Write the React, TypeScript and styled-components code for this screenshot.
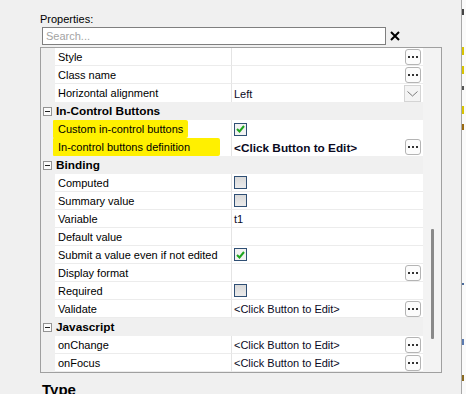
import styled, { createGlobalStyle } from 'styled-components';

const GlobalStyle = createGlobalStyle`
  html, body {
    margin: 0;
    padding: 0;
    background: #f0f0f0;
    overflow: hidden;
  }
  body {
    font-family: "Liberation Sans", Arial, sans-serif;
    font-size: 11px;
    color: #000;
  }
`;

type Row =
  | { kind: 'cat'; label: string }
  | {
      kind: 'prop';
      label: string;
      value?: string;
      bold?: boolean;
      check?: boolean;
      btn?: 'dots' | 'drop';
      hl?: number;
    };

const CLICK = '<Click Button to Edit>';

const rows: Row[] = [
  { kind: 'prop', label: 'Style', btn: 'dots' },
  { kind: 'prop', label: 'Class name', btn: 'dots' },
  { kind: 'prop', label: 'Horizontal alignment', value: 'Left', btn: 'drop' },
  { kind: 'cat', label: 'In-Control Buttons' },
  { kind: 'prop', label: 'Custom in-control buttons', check: true, hl: 5 },
  { kind: 'prop', label: 'In-control buttons definition', value: CLICK, bold: true, btn: 'dots', hl: 30 },
  { kind: 'cat', label: 'Binding' },
  { kind: 'prop', label: 'Computed', check: false },
  { kind: 'prop', label: 'Summary value', check: false },
  { kind: 'prop', label: 'Variable', value: 't1' },
  { kind: 'prop', label: 'Default value' },
  { kind: 'prop', label: 'Submit a value even if not edited', check: true },
  { kind: 'prop', label: 'Display format', btn: 'dots' },
  { kind: 'prop', label: 'Required', check: false },
  { kind: 'prop', label: 'Validate', value: CLICK, btn: 'dots' },
  { kind: 'cat', label: 'Javascript' },
  { kind: 'prop', label: 'onChange', value: CLICK, btn: 'dots' },
  { kind: 'prop', label: 'onFocus', value: CLICK, btn: 'dots' },
];

// little cut-off marks of the neighbouring panel: [gap above, height, colour]
const marks: [number, number, string][] = [
  [9, 6, '#444'],
  [32, 8, '#d8c400'],
  [11, 8, '#d8c400'],
  [12, 4, '#555'],
  [16, 8, '#d8c400'],
  [10, 6, '#9a6a10'],
  [153, 2, '#4a6a9a'],
  [54, 6, '#5a7ab0'],
  [30, 6, '#8a6a20'],
];

const Page = styled.div`
  display: flex;
  height: 394px;
`;

const Panel = styled.div`
  width: 462px;
  padding: 12px 0 0 40px;
  box-sizing: border-box;
  display: flex;
  flex-direction: column;
  border-right: 1px solid #a7a7a7;
`;

const Label = styled.div`
  line-height: 14px;
  margin-bottom: 1px;
`;

const SearchRow = styled.div`
  display: flex;
  align-items: center;
  gap: 4px;
  margin-left: 2px;
`;

const SearchBox = styled.div`
  width: 344px;
  height: 18px;
  box-sizing: border-box;
  border: 1px solid #7f7f7f;
  background: #fff;
  color: #a3a3a3;
  padding-left: 3px;
  line-height: 16px;
`;

const Grid = styled.div`
  margin-top: 2px;
  width: 402px;
  height: 330px;
  box-sizing: border-box;
  border: 1px solid #a0a0a0;
  display: flex;
  background: #f0f0f0;
`;

const List = styled.div`
  width: 382px;
  display: flex;
  flex-direction: column;
`;

const PropRow = styled.div`
  display: grid;
  grid-template-columns: 14px 177px 1fr;
  height: 18px;
`;

const Gutter = styled.div`
  display: flex;
  align-items: center;
  padding-left: 2px;
`;

const NameCell = styled.div`
  background: #fff;
  border-bottom: 1px solid #ececec;
  border-right: 1px solid #e4e4e4;
  padding: 1px 0 0 3px;
  line-height: 16px;
  white-space: nowrap;
`;

const ValueCell = styled.div<{ $bold?: boolean }>`
  background: #fff;
  border-bottom: 1px solid #ececec;
  display: flex;
  align-items: center;
  padding: 0 2px 0 2px;
  white-space: nowrap;
  font-weight: ${(p) => (p.$bold ? 700 : 400)};
  font-size: ${(p) => (p.$bold ? '11.8px' : '11px')};
  color: #0a0a1e;
`;

const ValueText = styled.span`
  flex: 1;
  padding-top: 1px;
`;

const Highlight = styled.span<{ $extra: number }>`
  display: inline-block;
  background: #fff000;
  margin-left: -5px;
  padding: 0 ${(p) => p.$extra}px 0 5px;
  height: 18px;
  margin-top: -1px;
  line-height: 18px;
  border-radius: 1px 2px 2px 1px;
`;

const CatRow = styled.div`
  display: grid;
  grid-template-columns: 14px 1fr;
  height: 18px;
  background: #f0f0f0;
`;

const CatLabel = styled.div`
  font-weight: 700;
  font-size: 11.8px;
  line-height: 18px;
  padding-left: 1px;
`;

const Collapse = styled.div`
  width: 9px;
  height: 9px;
  box-sizing: border-box;
  border: 1px solid #939393;
  background: #fbfbfb;
  display: flex;
  align-items: center;
  justify-content: center;
  &::after {
    content: '';
    width: 5px;
    height: 1px;
    background: #222;
  }
`;

const Check = styled.div<{ $on: boolean }>`
  width: 13px;
  height: 13px;
  box-sizing: border-box;
  border: 1px solid #2f4f74;
  background: ${(p) => (p.$on ? '#f2f2f2' : 'linear-gradient(#d9d9d9, #ebebeb)')};
  display: flex;
  align-items: center;
  justify-content: center;
`;

const DotsButton = styled.div`
  width: 16px;
  height: 16px;
  box-sizing: border-box;
  border: 1px solid #b4b4b4;
  border-radius: 3px;
  background: #fcfcfc;
  display: flex;
  align-items: center;
  justify-content: center;
  margin-left: auto;
`;

const DropButton = styled.div`
  width: 17px;
  height: 17px;
  box-sizing: border-box;
  border: 1px solid #d4d4d4;
  background: #f4f4f4;
  display: flex;
  align-items: center;
  justify-content: center;
  margin-left: auto;
  margin-top: 1px;
`;

const Scroll = styled.div`
  width: 18px;
  display: flex;
  justify-content: center;
  background: #f3f3f3;
`;

const Thumb = styled.div`
  width: 3px;
  height: 110px;
  margin-top: 181px;
  background: #898989;
  border-radius: 1px;
`;

const Heading = styled.div`
  margin-top: 8px;
  margin-left: 2px;
  font-weight: 700;
  font-size: 15px;
  line-height: 18px;
`;

const Strip = styled.div`
  flex: 1;
  background: #fafafa;
  display: flex;
  flex-direction: column;
`;

const Mark = styled.div<{ $gap: number; $h: number; $c: string }>`
  width: 2px;
  margin-top: ${(p) => p.$gap}px;
  height: ${(p) => p.$h}px;
  background: ${(p) => p.$c};
`;

const Dots = () => (
  <svg width="10" height="4" viewBox="0 0 10 4">
    <rect x="0" y="1" width="2" height="2" fill="#333" />
    <rect x="4" y="1" width="2" height="2" fill="#333" />
    <rect x="8" y="1" width="2" height="2" fill="#333" />
  </svg>
);

const Chevron = () => (
  <svg width="11" height="6" viewBox="0 0 11 6">
    <path d="M0.5 0.5 L5.5 5 L10.5 0.5" fill="none" stroke="#7a7a7a" strokeWidth="1" />
  </svg>
);

const Tick = () => (
  <svg width="9" height="8" viewBox="0 0 9 8">
    <path d="M1 4 L3.5 6.5 L8 1" fill="none" stroke="#1ea51e" strokeWidth="2" />
  </svg>
);

const Close = () => (
  <svg width="10" height="10" viewBox="0 0 10 10">
    <path d="M1 1 L9 9 M9 1 L1 9" stroke="#000" strokeWidth="2" />
  </svg>
);

const App: React.FC = () => {
  return (
    <>
      <GlobalStyle />
      <Page>
        <Panel>
          <Label>Properties:</Label>
          <SearchRow>
            <SearchBox>Search...</SearchBox>
            <Close />
          </SearchRow>
          <Grid>
            <List>
              {rows.map((r) =>
                r.kind === 'cat' ? (
                  <CatRow key={r.label}>
                    <Gutter>
                      <Collapse />
                    </Gutter>
                    <CatLabel>{r.label}</CatLabel>
                  </CatRow>
                ) : (
                  <PropRow key={r.label}>
                    <Gutter />
                    <NameCell>
                      {r.hl !== undefined ? <Highlight $extra={r.hl}>{r.label}</Highlight> : r.label}
                    </NameCell>
                    <ValueCell $bold={r.bold}>
                      {r.check !== undefined ? (
                        <Check $on={r.check}>{r.check && <Tick />}</Check>
                      ) : (
                        <ValueText>{r.value}</ValueText>
                      )}
                      {r.btn === 'dots' && (
                        <DotsButton>
                          <Dots />
                        </DotsButton>
                      )}
                      {r.btn === 'drop' && (
                        <DropButton>
                          <Chevron />
                        </DropButton>
                      )}
                    </ValueCell>
                  </PropRow>
                )
              )}
            </List>
            <Scroll>
              <Thumb />
            </Scroll>
          </Grid>
          <Heading>Type</Heading>
        </Panel>
        <Strip>
          {marks.map(([g, h, c], i) => (
            <Mark key={i} $gap={g} $h={h} $c={c} />
          ))}
        </Strip>
      </Page>
    </>
  );
};

export default App;
